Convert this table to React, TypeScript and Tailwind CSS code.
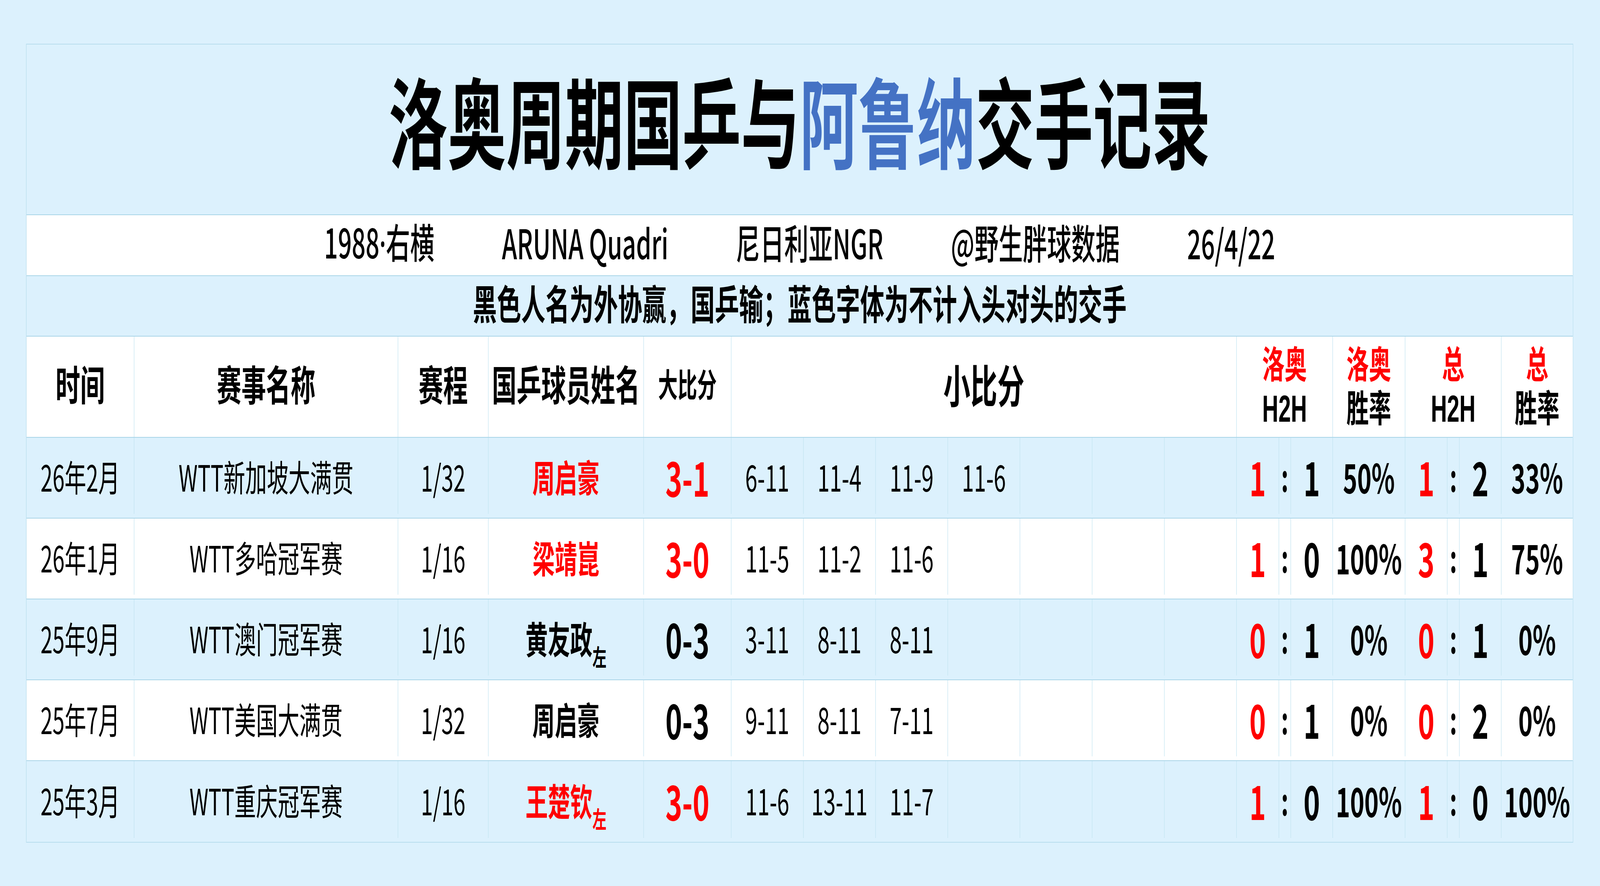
const grid =
  "grid grid-cols-[463px_1133px_388px_667px_376px_repeat(7,minmax(0,1fr))_182px_51px_180px_311px_181px_52px_180px_306px]";

type Row = {
  date: string;
  event: string;
  round: string;
  name: string;
  lefty?: boolean;
  win: boolean;
  score: string;
  games: string[];
  h2h: [string, string];
  rate: string;
  total: [string, string];
  totalRate: string;
};

const rows: Row[] = [
  {
    date: "26年2月",
    event: "WTT新加坡大满贯",
    round: "1/32",
    name: "周启豪",
    win: true,
    score: "3-1",
    games: ["6-11", "11-4", "11-9", "11-6"],
    h2h: ["1", "1"],
    rate: "50%",
    total: ["1", "2"],
    totalRate: "33%",
  },
  {
    date: "26年1月",
    event: "WTT多哈冠军赛",
    round: "1/16",
    name: "梁靖崑",
    win: true,
    score: "3-0",
    games: ["11-5", "11-2", "11-6"],
    h2h: ["1", "0"],
    rate: "100%",
    total: ["3", "1"],
    totalRate: "75%",
  },
  {
    date: "25年9月",
    event: "WTT澳门冠军赛",
    round: "1/16",
    name: "黄友政",
    lefty: true,
    win: false,
    score: "0-3",
    games: ["3-11", "8-11", "8-11"],
    h2h: ["0", "1"],
    rate: "0%",
    total: ["0", "1"],
    totalRate: "0%",
  },
  {
    date: "25年7月",
    event: "WTT美国大满贯",
    round: "1/32",
    name: "周启豪",
    win: false,
    score: "0-3",
    games: ["9-11", "8-11", "7-11"],
    h2h: ["0", "1"],
    rate: "0%",
    total: ["0", "2"],
    totalRate: "0%",
  },
  {
    date: "25年3月",
    event: "WTT重庆冠军赛",
    round: "1/16",
    name: "王楚钦",
    lefty: true,
    win: true,
    score: "3-0",
    games: ["11-6", "13-11", "11-7"],
    h2h: ["1", "0"],
    rate: "100%",
    total: ["1", "0"],
    totalRate: "100%",
  },
];

const cell = "flex items-center justify-center border-r-2 border-[#c2e4f1]";
const twoLine =
  "flex-col font-['Liberation_Sans','Noto_Sans_CJK_SC',sans-serif] text-[96px] font-bold leading-[112px]";

function TwoLine({ top, bottom }: { top: string; bottom: string }) {
  return (
    <>
      <div className="text-[#ff0000]">{top}</div>
      <div className="text-black">{bottom}</div>
    </>
  );
}

function HeadCell({ top, bottom, span }: { top: string; bottom: string; span?: boolean }) {
  return (
    <div className={`${cell} ${span ? "col-span-3" : ""} ${twoLine}`}>
      <TwoLine top={top} bottom={bottom} />
    </div>
  );
}

function BodyRow({ row, index }: { row: Row; index: number }) {
  const bg = index % 2 === 0 ? "bg-[#dcf1fd]" : "bg-white";
  const last = index === rows.length - 1;
  const games = [...row.games, "", "", "", "", "", "", ""].slice(0, 7);
  const red = row.win ? "text-[#ff0000]" : "text-black";
  return (
    <div
      className={`${grid} h-[207px] pb-[10px] ${bg} ${last ? "" : "border-b-2 border-[#a9d5e8]"} text-[93px] text-black`}
    >
      <div className={cell}>{row.date}</div>
      <div className={cell}>{row.event}</div>
      <div className={cell}>{row.round}</div>
      <div className={`${cell} text-[96px] font-bold ${red}`}>
        <span>
          {row.name}
          {row.lefty && <span className="relative top-[32px] text-[60px]">左</span>}
        </span>
      </div>
      <div className={`${cell} text-[122px] font-bold ${red}`}>{row.score}</div>
      {games.map((g, i) => (
        <div key={i} className={`${cell} text-[94px]`}>
          {g}
        </div>
      ))}
      <div className={`${cell} text-[120px] font-bold text-[#ff0000]`}>{row.h2h[0]}</div>
      <div className={`${cell} text-[96px] font-bold`}>:</div>
      <div className={`${cell} text-[120px] font-bold`}>{row.h2h[1]}</div>
      <div className={`${cell} text-[104px] font-bold`}>{row.rate}</div>
      <div className={`${cell} text-[120px] font-bold text-[#ff0000]`}>{row.total[0]}</div>
      <div className={`${cell} text-[96px] font-bold`}>:</div>
      <div className={`${cell} text-[120px] font-bold`}>{row.total[1]}</div>
      <div className="flex items-center justify-center text-[104px] font-bold">{row.totalRate}</div>
    </div>
  );
}

export default function App() {
  return (
    <div className="h-[2269px] w-screen overflow-hidden bg-[#dcf1fd]">
      <div className="h-[2269px] w-[6871px] origin-top-left scale-x-[0.59613] bg-[#dcf1fd] pl-[112px] pt-[112px] font-['Noto_Sans_CJK_SC','Noto_Sans',sans-serif] text-black">
        <div className="w-[6644px] border-2 border-[#b8ddee]">
          <div className="flex h-[437px] items-center justify-center border-b-2 border-[#a9d5e8] bg-[#dcf1fd] pb-[56px] text-[252px] font-bold leading-none">
            <span>洛奥周期国乒与</span>
            <span className="text-[#4472c4]">阿鲁纳</span>
            <span>交手记录</span>
          </div>

          <div className="flex h-[156px] items-center justify-center gap-[290px] border-b-2 border-[#a9d5e8] bg-white pb-[18px] text-[104px] font-medium">
            <span>
              1988<span className="font-['Noto_Sans',sans-serif]">·</span>右横
            </span>
            <span>ARUNA Quadri</span>
            <span>尼日利亚NGR</span>
            <span>@野生胖球数据</span>
            <span>26/4/22</span>
          </div>

          <div className="flex h-[155px] items-center justify-center border-b-2 border-[#a9d5e8] bg-[#dcf1fd] pb-[20px] text-[104px] font-bold">
            黑色人名为外协赢，国乒输；蓝色字体为不计入头对头的交手
          </div>

          <div className={`${grid} h-[259px] border-b-2 border-[#a9d5e8] bg-white`}>
            <div className={`${cell} pb-[20px] text-[106px] font-bold`}>时间</div>
            <div className={`${cell} pb-[20px] text-[106px] font-bold`}>赛事名称</div>
            <div className={`${cell} pb-[20px] text-[106px] font-bold`}>赛程</div>
            <div className={`${cell} pb-[20px] text-[106px] font-bold`}>国乒球员姓名</div>
            <div className={`${cell} pb-[20px] text-[84px] font-bold`}>大比分</div>
            <div className={`${cell} col-span-7 pb-[20px] text-[116px] font-bold`}>小比分</div>
            <HeadCell top="洛奥" bottom="H2H" span />
            <HeadCell top="洛奥" bottom="胜率" />
            <HeadCell top="总" bottom="H2H" span />
            <div className={`flex items-center justify-center ${twoLine}`}>
              <TwoLine top="总" bottom="胜率" />
            </div>
          </div>

          {rows.map((r, i) => (
            <BodyRow key={i} row={r} index={i} />
          ))}
        </div>
      </div>
    </div>
  );
}
